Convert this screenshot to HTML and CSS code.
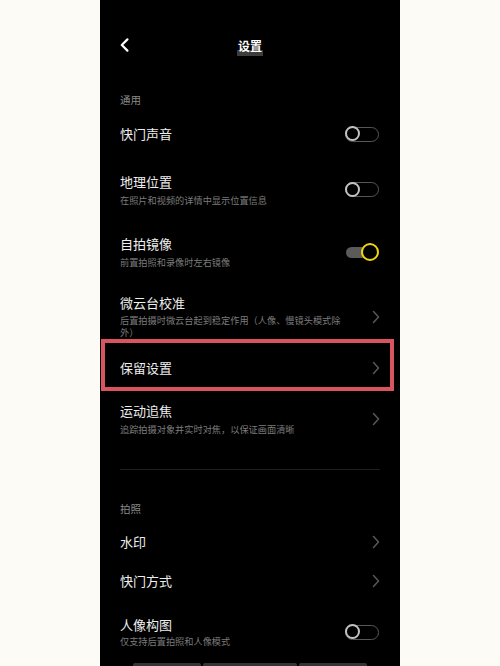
FILE: index.html
```html
<!DOCTYPE html>
<html lang="zh-CN">
<head>
<meta charset="utf-8">
<title>设置</title>
<link rel="stylesheet" href="styles.css">
</head>
<body>
<div class="page">
  <div class="screen">
    <header class="topbar">
      <svg class="back" width="9" height="14" viewBox="0 0 9 14"><path d="M7.4 1.4 L1.8 7 L7.4 12.6" fill="none" stroke="#fff" stroke-width="2.2" stroke-linecap="round" stroke-linejoin="round"/></svg>
      <h1 class="title"><span>设置</span></h1>
    </header>

    <div class="section-label first">通用</div>

    <div class="row r-shutter">
      <div class="text"><div class="name">快门声音</div></div>
      <span class="switch"></span>
    </div>

    <div class="row r-geo">
      <div class="text">
        <div class="name">地理位置</div>
        <div class="sub">在照片和视频的详情中显示位置信息</div>
      </div>
      <span class="switch"></span>
    </div>

    <div class="row r-mirror">
      <div class="text">
        <div class="name">自拍镜像</div>
        <div class="sub">前置拍照和录像时左右镜像</div>
      </div>
      <span class="switch on"></span>
    </div>

    <div class="row r-gimbal">
      <div class="text">
        <div class="name">微云台校准</div>
        <div class="sub wrap">后置拍摄时微云台起到稳定作用（人像、慢镜头模式除外）</div>
      </div>
      <svg class="chev" width="8" height="14" viewBox="0 0 8 14"><path d="M1.5 1.5 L6.5 7 L1.5 12.5" fill="none" stroke="#555" stroke-width="1.6" stroke-linecap="round" stroke-linejoin="round"/></svg>
    </div>

    <div class="row r-keep marked">
      <div class="text"><div class="name">保留设置</div></div>
      <svg class="chev" width="8" height="14" viewBox="0 0 8 14"><path d="M1.5 1.5 L6.5 7 L1.5 12.5" fill="none" stroke="#555" stroke-width="1.6" stroke-linecap="round" stroke-linejoin="round"/></svg>
    </div>

    <div class="row r-track">
      <div class="text">
        <div class="name">运动追焦</div>
        <div class="sub">追踪拍摄对象并实时对焦，以保证画面清晰</div>
      </div>
      <svg class="chev" width="8" height="14" viewBox="0 0 8 14"><path d="M1.5 1.5 L6.5 7 L1.5 12.5" fill="none" stroke="#555" stroke-width="1.6" stroke-linecap="round" stroke-linejoin="round"/></svg>
    </div>

    <div class="divider"></div>

    <div class="section-label second">拍照</div>

    <div class="row r-mark">
      <div class="text"><div class="name">水印</div></div>
      <svg class="chev" width="8" height="14" viewBox="0 0 8 14"><path d="M1.5 1.5 L6.5 7 L1.5 12.5" fill="none" stroke="#555" stroke-width="1.6" stroke-linecap="round" stroke-linejoin="round"/></svg>
    </div>

    <div class="row r-mode">
      <div class="text"><div class="name">快门方式</div></div>
      <svg class="chev" width="8" height="14" viewBox="0 0 8 14"><path d="M1.5 1.5 L6.5 7 L1.5 12.5" fill="none" stroke="#555" stroke-width="1.6" stroke-linecap="round" stroke-linejoin="round"/></svg>
    </div>

    <div class="row r-portrait">
      <div class="text">
        <div class="name">人像构图</div>
        <div class="sub tight">仅支持后置拍照和人像模式</div>
      </div>
      <span class="switch"></span>
    </div>

    <div class="peek">
      <span class="bar b1"></span>
      <span class="bar b2"></span>
      <span class="bar b3"></span>
    </div>
  </div>
</div>
</body>
</html>
```

FILE: styles.css
```css
html, body {
  margin: 0;
  padding: 0;
  background: #fcfbf6;
}

body {
  font-family: "Noto Sans CJK SC", "Noto Sans", sans-serif;
}

.page {
  display: flex;
  justify-content: center;
  width: 500px;
  height: 666px;
  overflow: hidden;
}

.screen {
  width: 300px;
  height: 666px;
  background: #000;
  overflow: hidden;
}

.topbar {
  height: 90px;
  display: grid;
  grid-template-columns: 1fr auto 1fr;
  align-items: center;
  padding: 0 20px;
}

.back {
  display: block;
  justify-self: start;
}

.title {
  margin: 0;
  font-size: 12px;
  font-weight: 700;
  color: #fff;
  line-height: 14px;
}

.title span {
  display: inline-block;
  margin-top: 4px;
  padding: 0 1px 3px;
  background: linear-gradient(to bottom, transparent 62%, #3d3d3d 62%);
}

.section-label {
  padding-left: 20px;
  font-size: 10.5px;
  line-height: 20px;
  height: 20px;
  color: #8a8a8a;
}

.section-label.second {
  margin-top: 29px;
}

.row {
  display: flex;
  align-items: center;
  justify-content: space-between;
  padding: 0 21px 0 20px;
  box-sizing: border-box;
}

.name {
  font-size: 13px;
  line-height: 16px;
  color: #eeeeee;
}

.sub {
  margin-top: 4px;
  font-size: 9.2px;
  line-height: 12px;
  color: #7c7c7c;
}

.sub.wrap {
  width: 226px;
  line-height: 11.6px;
}

.sub.tight {
  margin-top: 2px;
}

.r-shutter { height: 48px; }
.r-geo { height: 63px; }
.r-mirror { height: 62px; }
.r-gimbal { padding-top: 12px; padding-bottom: 6px; }
.r-keep { height: 48px; }
.r-track { padding-top: 11px; padding-bottom: 10px; }
.r-mark { height: 45px; }
.r-mode { height: 34px; }
.r-portrait { padding-top: 19px; }

.marked {
  position: relative;
}

.marked::after {
  content: "";
  position: absolute;
  left: 1px;
  right: 6px;
  top: -5px;
  bottom: 1px;
  border: 4px solid #d8555f;
}

.chev {
  display: block;
  flex: none;
  margin-right: -1px;
}

.switch {
  position: relative;
  flex: none;
  width: 34px;
  height: 15px;
  box-sizing: border-box;
  border: 1.5px solid #575757;
  border-radius: 8px;
}

.switch::before {
  content: "";
  position: absolute;
  left: -1.5px;
  top: -1.5px;
  width: 15px;
  height: 15px;
  box-sizing: border-box;
  border: 2px solid #c2c2c2;
  border-radius: 50%;
  background: #000;
}

.switch.on {
  width: 33px;
  height: 18px;
  border: none;
}

.switch.on::after {
  content: "";
  position: absolute;
  left: 0;
  top: 3.5px;
  width: 24px;
  height: 11px;
  border-radius: 6px;
  background: #5a5a5a;
}

.switch.on::before {
  left: auto;
  right: 0;
  top: 0;
  width: 18px;
  height: 18px;
  border: 2.5px solid #f0d20e;
  z-index: 1;
}

.divider {
  height: 1px;
  margin: 24px 20px 0;
  background: #1e1e1e;
}

.peek {
  display: flex;
  gap: 2px;
  margin-top: 16px;
  padding-left: 33px;
}

.bar {
  display: block;
  height: 4px;
  background: #343434;
  border-radius: 2px 2px 0 0;
}

.b1 { width: 68px; }
.b2 { width: 94px; }
.b3 { width: 68px; }
```
